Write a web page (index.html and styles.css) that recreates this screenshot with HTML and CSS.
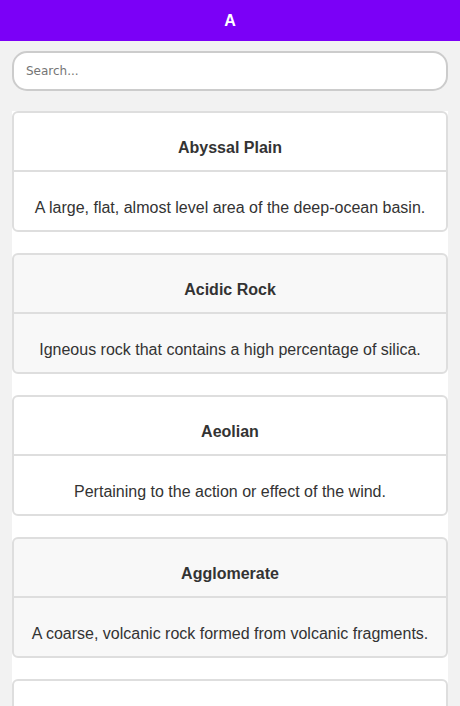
FILE: index.html
```html
<!DOCTYPE html>
<html lang="en">
<head>
<meta charset="utf-8">
<title>Glossary — A</title>
<link rel="stylesheet" href="styles.css">
</head>
<body>
<header class="topbar">A</header>
<div class="search-wrap">
  <input class="search" type="text" placeholder="Search...">
</div>
<main class="list">
  <section class="card"><h2 class="card-title">Abyssal Plain</h2><p class="card-body">A large, flat, almost level area of the deep-ocean basin.</p></section>
  <section class="card"><h2 class="card-title">Acidic Rock</h2><p class="card-body">Igneous rock that contains a high percentage of silica.</p></section>
  <section class="card"><h2 class="card-title">Aeolian</h2><p class="card-body">Pertaining to the action or effect of the wind.</p></section>
  <section class="card"><h2 class="card-title">Agglomerate</h2><p class="card-body">A coarse, volcanic rock formed from volcanic fragments.</p></section>
  <section class="card"><h2 class="card-title">Aggradation</h2><p class="card-body">The building up of a land surface by deposition.</p></section>
  <section class="card"><h2 class="card-title">Alabaster</h2><p class="card-body">A fine-grained, massive variety of gypsum.</p></section>
  <section class="card"><h2 class="card-title">Albite</h2><p class="card-body">A sodium-rich plagioclase feldspar mineral.</p></section>
  <section class="card"><h2 class="card-title">Alkali Basalt</h2><p class="card-body">A basalt relatively rich in sodium and potassium.</p></section>
  <section class="card"><h2 class="card-title">Alluvial Fan</h2><p class="card-body">A fan-shaped deposit formed at a mountain front.</p></section>
  <section class="card"><h2 class="card-title">Alluvium</h2><p class="card-body">Sediment deposited by flowing water in river beds.</p></section>
  <section class="card"><h2 class="card-title">Alpine Glacier</h2><p class="card-body">A glacier confined to a valley in a mountain region.</p></section>
  <section class="card"><h2 class="card-title">Alteration</h2><p class="card-body">A change in the mineral composition of a rock.</p></section>
  <section class="card"><h2 class="card-title">Amber</h2><p class="card-body">Fossilized tree resin, often with trapped insects.</p></section>
  <section class="card"><h2 class="card-title">Amethyst</h2><p class="card-body">A purple variety of quartz.</p></section>
  <section class="card"><h2 class="card-title">Ammonite</h2><p class="card-body">An extinct marine cephalopod with a coiled shell.</p></section>
  <section class="card"><h2 class="card-title">Amorphous</h2><p class="card-body">Having no regular internal crystal structure.</p></section>
  <section class="card"><h2 class="card-title">Amphibole</h2><p class="card-body">A group of dark, rock-forming silicate minerals.</p></section>
  <section class="card"><h2 class="card-title">Amphibolite</h2><p class="card-body">A metamorphic rock rich in amphibole and plagioclase.</p></section>
  <section class="card"><h2 class="card-title">Amygdule</h2><p class="card-body">A gas cavity in lava filled with secondary minerals.</p></section>
  <section class="card"><h2 class="card-title">Anatexis</h2><p class="card-body">The partial melting of pre-existing rock.</p></section>
  <section class="card"><h2 class="card-title">Andesite</h2><p class="card-body">A fine-grained, intermediate volcanic rock.</p></section>
  <section class="card"><h2 class="card-title">Angle of Repose</h2><p class="card-body">The steepest angle at which loose material is stable.</p></section>
  <section class="card"><h2 class="card-title">Angular Unconformity</h2><p class="card-body">An unconformity between tilted and flat-lying strata.</p></section>
  <section class="card"><h2 class="card-title">Anhydrite</h2><p class="card-body">A mineral composed of anhydrous calcium sulfate.</p></section>
  <section class="card"><h2 class="card-title">Anorthosite</h2><p class="card-body">An igneous rock made almost entirely of plagioclase.</p></section>
  <section class="card"><h2 class="card-title">Antecedent Stream</h2><p class="card-body">A stream that kept its course across rising land.</p></section>
  <section class="card"><h2 class="card-title">Anthracite</h2><p class="card-body">A hard, compact variety of coal rich in carbon.</p></section>
  <section class="card"><h2 class="card-title">Anticline</h2><p class="card-body">A fold in rock strata that is convex upward.</p></section>
  <section class="card"><h2 class="card-title">Apatite</h2><p class="card-body">A group of calcium phosphate minerals.</p></section>
  <section class="card"><h2 class="card-title">Aphanitic</h2><p class="card-body">Having crystals too small to see with the eye.</p></section>
  <section class="card"><h2 class="card-title">Aphotic Zone</h2><p class="card-body">The deep layer of the ocean that receives no light.</p></section>
  <section class="card"><h2 class="card-title">Aquiclude</h2><p class="card-body">A layer of rock that prevents groundwater flow.</p></section>
  <section class="card"><h2 class="card-title">Aquifer</h2><p class="card-body">A permeable rock body that holds groundwater.</p></section>
  <section class="card"><h2 class="card-title">Aquitard</h2><p class="card-body">A layer of rock that slows groundwater flow.</p></section>
  <section class="card"><h2 class="card-title">Aragonite</h2><p class="card-body">A carbonate mineral, a polymorph of calcite.</p></section>
  <section class="card"><h2 class="card-title">Archean</h2><p class="card-body">The eon from about 4 to 2.5 billion years ago.</p></section>
  <section class="card"><h2 class="card-title">Arête</h2><p class="card-body">A sharp ridge formed between two glacial cirques.</p></section>
  <section class="card"><h2 class="card-title">Arkose</h2><p class="card-body">A sandstone containing at least 25% feldspar.</p></section>
  <section class="card"><h2 class="card-title">Arroyo</h2><p class="card-body">A steep-sided, dry gully in an arid region.</p></section>
  <section class="card"><h2 class="card-title">Artesian Well</h2><p class="card-body">A well in which water rises under natural pressure.</p></section>
  <section class="card"><h2 class="card-title">Asbestos</h2><p class="card-body">A fibrous silicate mineral once used as insulation.</p></section>
  <section class="card"><h2 class="card-title">Ash</h2><p class="card-body">Fine particles of rock blown from a volcanic vent.</p></section>
  <section class="card"><h2 class="card-title">Asphalt</h2><p class="card-body">A dark, sticky form of petroleum.</p></section>
  <section class="card"><h2 class="card-title">Assimilation</h2><p class="card-body">The incorporation of wall rock into a magma.</p></section>
  <section class="card"><h2 class="card-title">Asthenosphere</h2><p class="card-body">The weak, ductile layer of the upper mantle.</p></section>
  <section class="card"><h2 class="card-title">Atoll</h2><p class="card-body">A ring-shaped coral reef enclosing a lagoon.</p></section>
  <section class="card"><h2 class="card-title">Attitude</h2><p class="card-body">The orientation of a geologic feature in space.</p></section>
  <section class="card"><h2 class="card-title">Augen</h2><p class="card-body">Large, eye-shaped grains in a metamorphic rock.</p></section>
  <section class="card"><h2 class="card-title">Augite</h2><p class="card-body">A common dark green to black pyroxene mineral.</p></section>
  <section class="card"><h2 class="card-title">Aureole</h2><p class="card-body">A zone of contact metamorphism around an intrusion.</p></section>
  <section class="card"><h2 class="card-title">Authigenic</h2><p class="card-body">Formed in place rather than transported.</p></section>
  <section class="card"><h2 class="card-title">Avalanche</h2><p class="card-body">A rapid flow of snow, ice or rock down a slope.</p></section>
  <section class="card"><h2 class="card-title">Avulsion</h2><p class="card-body">The sudden shift of a river to a new channel.</p></section>
  <section class="card"><h2 class="card-title">Axial Plane</h2><p class="card-body">The plane that divides a fold most symmetrically.</p></section>
  <section class="card"><h2 class="card-title">Axis</h2><p class="card-body">The line about which a fold is bent.</p></section>
  <section class="card"><h2 class="card-title">Azurite</h2><p class="card-body">A deep-blue copper carbonate mineral.</p></section>
</main>
</body>
</html>
```

FILE: styles.css
```css
html, body {
  margin: 0;
  padding: 0;
}

body {
  background: #f2f2f2;
  font-family: "Liberation Sans", Arial, sans-serif;
  color: #333333;
}

.topbar {
  height: 41px;
  background: #7b00f7;
  color: #ffffff;
  font-weight: bold;
  font-size: 16px;
  display: flex;
  align-items: center;
  justify-content: center;
}

.search-wrap {
  padding: 10px 12px 20px 12px;
}

.search {
  display: block;
  box-sizing: border-box;
  width: 100%;
  height: 40px;
  margin: 0;
  padding: 0 12px;
  border: 2px solid #cccccc;
  border-radius: 15px;
  background: #ffffff;
  font-family: "DejaVu Sans", sans-serif;
  font-size: 12px;
  color: #333333;
  outline: none;
}

.search::placeholder {
  color: #757575;
}

.list {
  margin: 0 12px;
  background: #ffffff;
  display: flex;
  flex-direction: column;
  gap: 21px;
}

.card {
  border: 2px solid #dedede;
  border-radius: 6px;
  background: #ffffff;
  text-align: center;
}

.card:nth-child(even) {
  background: #f8f8f8;
}

.card-title {
  margin: 0;
  padding: 26px 10px 13px;
  font-size: 16px;
  line-height: 18px;
  font-weight: bold;
  color: #333333;
  border-bottom: 2px solid #dedede;
}

.card-body {
  margin: 0;
  padding: 27px 10px 13px;
  font-size: 16px;
  line-height: 18px;
  color: #333333;
}
```
